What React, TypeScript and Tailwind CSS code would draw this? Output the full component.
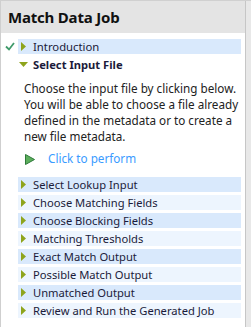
import React from 'react';

const steps = [
  'Select Lookup Input',
  'Choose Matching Fields',
  'Choose Blocking Fields',
  'Matching Thresholds',
  'Exact Match Output',
  'Possible Match Output',
  'Unmatched Output',
  'Review and Run the Generated Job',
];

const RightArrow = () => (
  <svg width="5" height="9" viewBox="0 0 5 9" className="shrink-0">
    <path d="M0 0 L5 4.5 L0 9 Z" fill="#8ea41c" />
  </svg>
);

const DownArrow = () => (
  <svg width="9" height="5" viewBox="0 0 9 5" className="shrink-0">
    <path d="M0 0 L9 0 L4.5 5 Z" fill="#8ea41c" />
  </svg>
);

const Check = () => (
  <svg width="10" height="9" viewBox="0 0 10 9" className="shrink-0">
    <path d="M1 4.5 L4 7.5 L9 1" fill="none" stroke="#3f9a6a" strokeWidth="1.8" />
  </svg>
);

const PlayIcon = () => (
  <svg width="10" height="11" viewBox="0 0 10 11" className="shrink-0">
    <path d="M0.5 0.5 L9.5 5.5 L0.5 10.5 Z" fill="#5cae5c" stroke="#2f7a3a" strokeWidth="1" />
  </svg>
);

export default function App() {
  return (
    <div
      className="flex w-[251px] h-[327px] bg-white border-t border-[#d0d0d0] overflow-hidden"
      style={{ fontFamily: '"Noto Sans", "Open Sans", sans-serif' }}
    >
      <div className="flex-1 flex flex-col border-l border-[#cfcfcf]">
        <div className="h-[32px] bg-[#e4e4e4] flex items-center pl-[7px]">
          <span className="text-[15px] font-bold text-[#111] tracking-[-0.2px]">Match Data Job</span>
        </div>

        <div className="flex flex-col mt-[6px]">
          {/* Introduction (done) */}
          <div className="flex items-center h-[15px]">
            <div className="w-[17px] flex justify-center pl-[1px]">
              <Check />
            </div>
            <div className="flex items-center flex-1 h-[15px] mr-[4px] bg-[#d9e9fc] pl-[3px]">
              <RightArrow />
              <span className="ml-[7px] text-[11.3px] text-[#1b1b3a] leading-none">Introduction</span>
            </div>
          </div>

          {/* Select Input File (open) */}
          <div className="flex items-center h-[15px] mt-[3px] pl-[18px]">
            <DownArrow />
            <span className="ml-[5px] text-[11.2px] font-bold text-[#1b1b3a] leading-none">Select Input File</span>
          </div>

          <p className="mt-[8px] ml-[23px] text-[11.7px] leading-[16px] text-[#222] whitespace-nowrap">
            Choose the input file by clicking below.
            <br />
            You will be able to choose a file already
            <br />
            defined in the metadata or to create a
            <br />
            new file metadata.
          </p>

          <div className="flex items-center h-[16px] mt-[7px] ml-[24px]">
            <PlayIcon />
            <span className="ml-[13px] text-[11.7px] text-[#3a9bff] leading-none">Click to perform</span>
          </div>

          <div className="flex flex-col gap-[3px] mt-[10px] ml-[17px] mr-[4px]">
            {steps.map((s, i) => (
              <div
                key={s}
                className={`flex items-center h-[15px] pl-[3px] ${i % 2 === 0 ? 'bg-[#d9e9fc]' : 'bg-[#edf5fe]'}`}
              >
                <RightArrow />
                <span className="ml-[7px] text-[11.2px] text-[#1b1b3a] leading-none">{s}</span>
              </div>
            ))}
          </div>
        </div>
      </div>
      <div className="w-[6px] border-l border-[#c6c6c6] bg-[#e8e8e8]" />
    </div>
  );
}
